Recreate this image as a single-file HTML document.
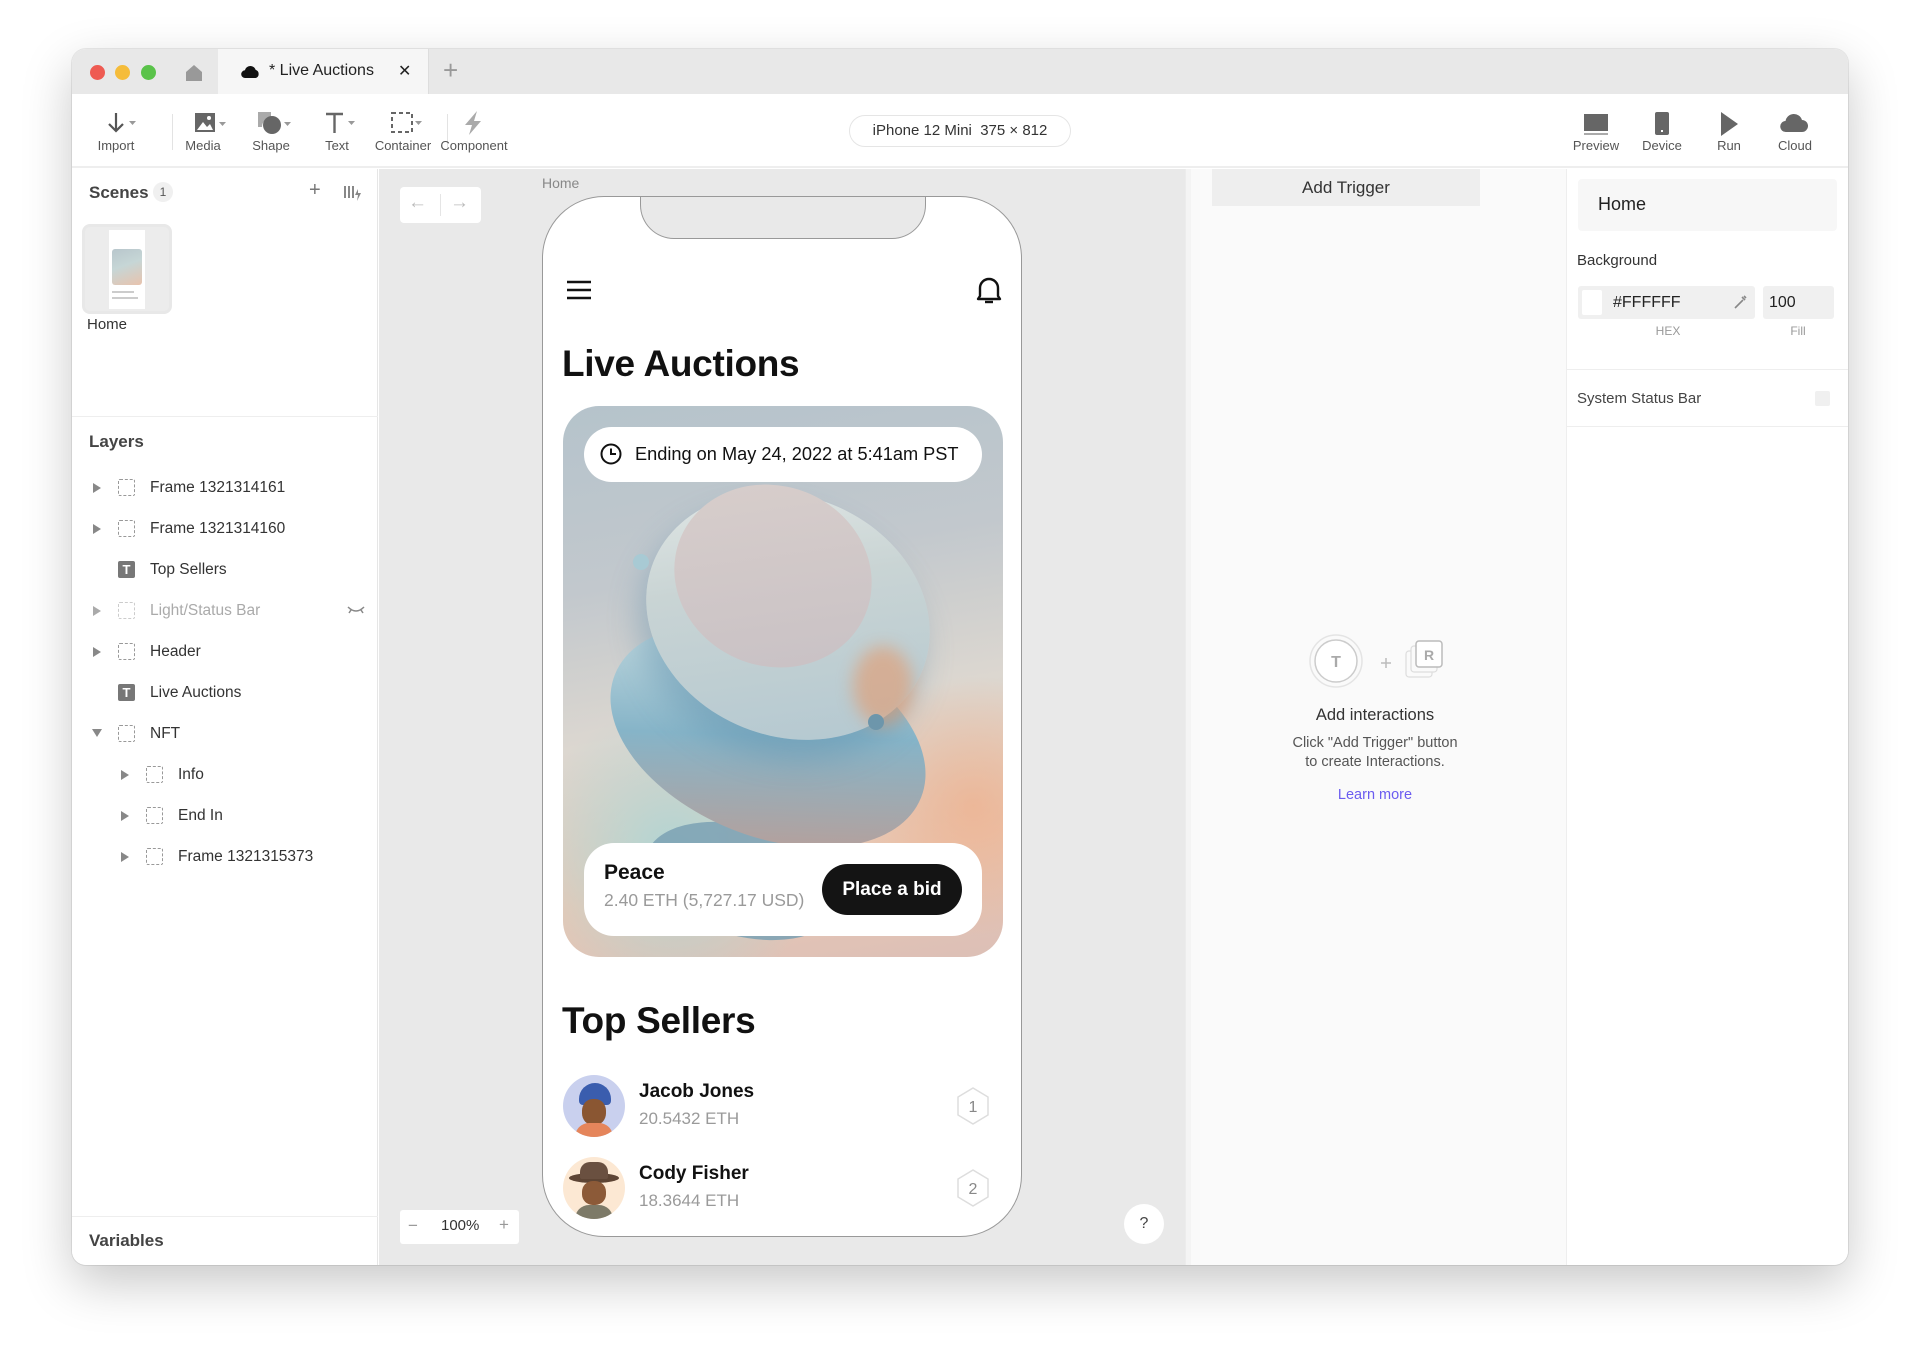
<!DOCTYPE html>
<html><head><meta charset="utf-8"><style>
*{box-sizing:border-box;margin:0;padding:0}
body{width:1920px;height:1361px;background:#fff;font-family:"Liberation Sans",sans-serif;position:relative;overflow:hidden;color:#333}
.abs{position:absolute}
.win{position:absolute;left:72px;top:49px;width:1776px;height:1216px;border-radius:14px;overflow:hidden;background:#fff;box-shadow:0 18px 50px rgba(0,0,0,.22),0 0 0 1px rgba(0,0,0,.08)}
.t{position:absolute;white-space:nowrap}
.lbl{font-size:13px;color:#555;text-align:center;width:90px}
.dash{position:absolute;width:17px;height:17px;border:1.5px dashed #999;border-radius:2px}
.tri{position:absolute;width:0;height:0;border-left:8px solid #888;border-top:5px solid transparent;border-bottom:5px solid transparent}
.ticon{position:absolute;width:17px;height:17px;background:#777;color:#fff;font-size:13px;font-weight:bold;text-align:center;line-height:17px;border-radius:2px}
</style></head><body>
<div class="win">
 <div class="abs" style="left:0;top:0;width:1776px;height:45px;background:#e8e8e8"></div>
 <div class="abs" style="left:18px;top:16px;width:15px;height:15px;border-radius:50%;background:#ee5b52"></div>
 <div class="abs" style="left:43px;top:16px;width:15px;height:15px;border-radius:50%;background:#f5bc3a"></div>
 <div class="abs" style="left:69px;top:16px;width:15px;height:15px;border-radius:50%;background:#5ac34a"></div>
 <svg class="abs" style="left:112px;top:14px" width="20" height="20" viewBox="0 0 20 20"><path d="M2 9 L10 2 L18 9 V18 H2Z" fill="#999"/></svg>
 <div class="abs" style="left:146px;top:0;width:210px;height:45px;background:#f6f6f6"></div>
 <svg class="abs" style="left:169px;top:16px" width="19" height="14" viewBox="0 0 22 16"><path d="M5 15 A4.5 4.5 0 0 1 4.5 6 A6.5 6.5 0 0 1 17 5.5 A5 5 0 0 1 17 15Z" fill="#111"/></svg>
 <div class="t" style="left:197px;top:13px;font-size:16px;color:#222">* Live Auctions</div>
 <div class="t" style="left:326px;top:12px;font-size:16px;color:#222">✕</div>
 <div class="abs" style="left:356px;top:0;width:1px;height:45px;background:#ddd"></div>
 <div class="t" style="left:371px;top:6px;font-size:26px;color:#999;font-weight:300">+</div>
 <div class="abs" style="left:0;top:45px;width:1776px;height:74px;background:#fff;border-bottom:2px solid #eee"></div>
 <svg class="abs" style="left:34px;top:62px" width="34" height="24" viewBox="0 0 34 24"><path d="M10 2V20M3 13L10 20L17 13" stroke="#555" stroke-width="2.2" fill="none"/><path d="M23 10h7l-3.5 4z" fill="#999"/></svg>
 <div class="t lbl" style="left:-1px;top:89px">Import</div>
 <div class="abs" style="left:100px;top:65px;width:1px;height:36px;background:#e3e3e3"></div>
 <svg class="abs" style="left:121px;top:63px" width="36" height="22" viewBox="0 0 36 22"><rect x="2" y="1" width="20" height="19" fill="#666"/><path d="M4 18L10 10L14 15L17 12L20 18Z" fill="#fff"/><circle cx="16" cy="6" r="2" fill="#fff"/><path d="M26 10h7l-3.5 4z" fill="#999"/></svg>
 <div class="t lbl" style="left:86px;top:89px">Media</div>
 <svg class="abs" style="left:184px;top:61px" width="38" height="26" viewBox="0 0 38 26"><path d="M2 2h13v6a9 9 0 0 0-9 9H2Z" fill="#aaa"/><circle cx="16" cy="15" r="9" fill="#666"/><path d="M28 12h7l-3.5 4z" fill="#999"/></svg>
 <div class="t lbl" style="left:154px;top:89px">Shape</div>
 <svg class="abs" style="left:252px;top:62px" width="34" height="24" viewBox="0 0 34 24"><path d="M2 3h17M10.5 3V22" stroke="#666" stroke-width="2.4"/><path d="M24 10h7l-3.5 4z" fill="#999"/></svg>
 <div class="t lbl" style="left:220px;top:89px">Text</div>
 <svg class="abs" style="left:318px;top:62px" width="36" height="24" viewBox="0 0 36 24"><rect x="2" y="2" width="20" height="19" fill="none" stroke="#666" stroke-width="2" stroke-dasharray="4 3"/><path d="M25 10h7l-3.5 4z" fill="#999"/></svg>
 <div class="t lbl" style="left:286px;top:89px">Container</div>
 <div class="abs" style="left:375px;top:65px;width:1px;height:36px;background:#e3e3e3"></div>
 <svg class="abs" style="left:389px;top:61px" width="24" height="26" viewBox="0 0 24 26"><path d="M16 1L4 15h7l-3 10L20 11h-7z" fill="#aaa"/></svg>
 <div class="t lbl" style="left:357px;top:89px">Component</div>
 <div class="abs" style="left:777px;top:66px;width:222px;height:32px;border:1.5px solid #e5e5e5;border-radius:16px;font-size:15px;color:#333;text-align:center;line-height:29px">iPhone 12 Mini&nbsp; 375 × 812</div>
 <svg class="abs" style="left:1509px;top:63px" width="30" height="26" viewBox="0 0 30 26"><rect x="3" y="2" width="24" height="17" fill="#666"/><rect x="3" y="21" width="24" height="2" fill="#aaa"/></svg>
 <div class="t lbl" style="left:1479px;top:89px">Preview</div>
 <svg class="abs" style="left:1580px;top:62px" width="20" height="26" viewBox="0 0 20 26"><rect x="3" y="1" width="14" height="23" rx="2" fill="#666"/><rect x="9" y="19" width="2" height="2" fill="#fff"/></svg>
 <div class="t lbl" style="left:1545px;top:89px">Device</div>
 <svg class="abs" style="left:1646px;top:62px" width="22" height="26" viewBox="0 0 22 26"><path d="M3 1L20 13L3 25Z" fill="#666"/></svg>
 <div class="t lbl" style="left:1612px;top:89px">Run</div>
 <svg class="abs" style="left:1707px;top:63px" width="30" height="22" viewBox="0 0 30 22"><path d="M7 20A5.5 5.5 0 0 1 6.5 9A8.5 8.5 0 0 1 23 8A6 6 0 0 1 23 20Z" fill="#666"/></svg>
 <div class="t lbl" style="left:1678px;top:89px">Cloud</div>
 <div class="abs" style="left:0;top:120px;width:306px;height:1096px;background:#fff;border-right:1px solid #e6e6e6"></div>
 <div class="t" style="left:17px;top:134px;font-size:17px;font-weight:bold;color:#444">Scenes</div>
 <div class="abs" style="left:81px;top:133px;width:20px;height:20px;border-radius:10px;background:#f0f0f0;font-size:12px;text-align:center;line-height:20px;color:#555">1</div>
 <div class="t" style="left:237px;top:130px;font-size:20px;color:#777">+</div>
 <svg class="abs" style="left:271px;top:135px" width="20" height="18" viewBox="0 0 20 18"><path d="M2 2v12M6 2v12M10 2v12" stroke="#888" stroke-width="2"/><path d="M15 5l-3 6h3l-1 6 4-8h-3z" fill="#888"/></svg>
 <div class="abs" style="left:10px;top:175px;width:90px;height:90px;border:3px solid #e8e8e8;border-radius:8px;background:#ececec"></div>
 <div class="abs" style="left:37px;top:181px;width:36px;height:79px;background:#fff"></div>
 <div class="abs" style="left:40px;top:200px;width:30px;height:36px;border-radius:3px;background:linear-gradient(160deg,#b8c6cc,#c6d6d6 45%,#e8c3ad)"></div>
 <div class="abs" style="left:40px;top:242px;width:22px;height:2px;background:#ccc"></div>
 <div class="abs" style="left:40px;top:248px;width:26px;height:2px;background:#ccc"></div>
 <div class="t" style="left:15px;top:267px;font-size:15px;color:#333">Home</div>
 <div class="abs" style="left:0;top:367px;width:306px;height:1px;background:#eee"></div>
 <div class="t" style="left:17px;top:383px;font-size:17px;font-weight:bold;color:#444">Layers</div>
 <div class="abs" style="left:0;top:0;width:306px">
  <div class="tri" style="left:21px;top:434px"></div><div class="dash" style="left:46px;top:430px"></div><div class="t" style="left:78px;top:430px;font-size:15.5px;color:#333">Frame 1321314161</div>
  <div class="tri" style="left:21px;top:475px"></div><div class="dash" style="left:46px;top:471px"></div><div class="t" style="left:78px;top:471px;font-size:15.5px;color:#333">Frame 1321314160</div>
  <div class="ticon" style="left:46px;top:512px">T</div><div class="t" style="left:78px;top:512px;font-size:15.5px;color:#333">Top Sellers</div>
  <div class="tri" style="left:21px;top:557px;border-left-color:#aaa"></div><div class="dash" style="left:46px;top:553px;border-color:#ccc"></div><div class="t" style="left:78px;top:553px;font-size:15.5px;color:#aaa">Light/Status Bar</div>
  <svg class="abs" style="left:275px;top:556px" width="18" height="10" viewBox="0 0 18 10"><path d="M1 2Q9 10 17 2M4 5l-2 3M14 5l2 3" stroke="#888" stroke-width="1.5" fill="none"/></svg>
  <div class="tri" style="left:21px;top:598px"></div><div class="dash" style="left:46px;top:594px"></div><div class="t" style="left:78px;top:594px;font-size:15.5px;color:#333">Header</div>
  <div class="ticon" style="left:46px;top:635px">T</div><div class="t" style="left:78px;top:635px;font-size:15.5px;color:#333">Live Auctions</div>
  <div class="abs" style="left:20px;top:680px;border-top:8px solid #888;border-left:5px solid transparent;border-right:5px solid transparent"></div><div class="dash" style="left:46px;top:676px"></div><div class="t" style="left:78px;top:676px;font-size:15.5px;color:#333">NFT</div>
  <div class="tri" style="left:49px;top:721px"></div><div class="dash" style="left:74px;top:717px"></div><div class="t" style="left:106px;top:717px;font-size:15.5px;color:#333">Info</div>
  <div class="tri" style="left:49px;top:762px"></div><div class="dash" style="left:74px;top:758px"></div><div class="t" style="left:106px;top:758px;font-size:15.5px;color:#333">End In</div>
  <div class="tri" style="left:49px;top:803px"></div><div class="dash" style="left:74px;top:799px"></div><div class="t" style="left:106px;top:799px;font-size:15.5px;color:#333">Frame 1321315373</div>
 </div>
 <div class="abs" style="left:0;top:1167px;width:306px;height:1px;background:#eee"></div>
 <div class="t" style="left:17px;top:1182px;font-size:17px;font-weight:bold;color:#444">Variables</div>
 <div class="abs" style="left:307px;top:120px;width:806px;height:1096px;background:#e9e9e9"></div>
 <div class="abs" style="left:328px;top:138px;width:81px;height:36px;background:#fff;border-radius:4px"></div>
 <div class="abs" style="left:368px;top:145px;width:1px;height:22px;background:#e5e5e5"></div>
 <div class="t" style="left:336px;top:143px;font-size:19px;color:#bbb">←</div>
 <div class="t" style="left:378px;top:143px;font-size:19px;color:#bbb">→</div>
 <div class="t" style="left:470px;top:126px;font-size:14px;color:#888">Home</div>
 <div class="abs" style="left:470px;top:147px;width:480px;height:1041px;background:#fff;border:1.5px solid #999;border-radius:62px;overflow:hidden">
  <div class="abs" style="left:97px;top:-4px;width:286px;height:46px;background:#e9e9e9;border:1.5px solid #999;border-top:none;border-radius:0 0 34px 34px"></div>
  <svg class="abs" style="left:22px;top:82px" width="28" height="22" viewBox="0 0 28 22"><path d="M2 3h24M2 11h24M2 19h24" stroke="#111" stroke-width="2.5"/></svg>
  <svg class="abs" style="left:432px;top:78px" width="28" height="30" viewBox="0 0 28 30"><path d="M5 21V13a9 9 0 0 1 18 0v8l2 3H3Z" stroke="#111" stroke-width="2.4" fill="none" stroke-linejoin="round"/><path d="M10 27h8" stroke="#111" stroke-width="2.4"/></svg>
  <div class="t" style="left:19px;top:146px;font-size:37px;font-weight:bold;color:#111;letter-spacing:-.3px">Live Auctions</div>
  <div class="abs" style="left:20px;top:209px;width:440px;height:551px;border-radius:36px;overflow:hidden;background:linear-gradient(170deg,#b5c3cb 0%,#c2c8cd 30%,#dcd7d0 55%,#e8c8b5 80%,#dcbfb6 100%)">
   <div class="abs" style="left:-40px;top:300px;width:300px;height:300px;border-radius:50%;background:radial-gradient(circle,rgba(170,215,215,.9),rgba(170,215,215,0) 70%)"></div>
   <div class="abs" style="left:300px;top:250px;width:220px;height:300px;border-radius:50%;background:radial-gradient(circle,rgba(240,170,130,.6),rgba(240,170,130,0) 70%)"></div>
   <div class="abs" style="left:80px;top:420px;width:200px;height:110px;border-radius:50%;background:#7ba1b4;transform:rotate(15deg);opacity:.85"></div>
   <div class="abs" style="left:40px;top:230px;width:330px;height:200px;border-radius:50%;background:linear-gradient(160deg,#d8e6e6,#86b4c8 50%,#c49a8e);transform:rotate(22deg)"></div>
   <div class="abs" style="left:80px;top:90px;width:290px;height:240px;border-radius:50%;background:linear-gradient(150deg,#e7ecea,#c9d4d4 40%,#b0c6d0);transform:rotate(22deg);box-shadow:0 20px 30px rgba(90,140,170,.4)"></div>
   <div class="abs" style="left:110px;top:80px;width:200px;height:180px;border-radius:50%;background:linear-gradient(150deg,#d9cfcc,#c7c0c4);transform:rotate(22deg)"></div>
   <div class="abs" style="left:290px;top:240px;width:60px;height:80px;border-radius:50%;background:rgba(232,150,100,.55);filter:blur(8px)"></div>
   <div class="abs" style="left:70px;top:148px;width:16px;height:16px;border-radius:50%;background:#a8cad4"></div>
   <div class="abs" style="left:305px;top:308px;width:16px;height:16px;border-radius:50%;background:#6d96ab"></div>
   <div class="abs" style="left:21px;top:21px;width:398px;height:55px;border-radius:28px;background:#fff"></div>
   <svg class="abs" style="left:36px;top:36px" width="24" height="24" viewBox="0 0 24 24"><circle cx="12" cy="12" r="9.5" stroke="#111" stroke-width="2" fill="none"/><path d="M12 6.5V12h5" stroke="#111" stroke-width="2" fill="none"/></svg>
   <div class="t" style="left:72px;top:38px;font-size:18.2px;color:#111">Ending on May 24, 2022 at 5:41am PST</div>
   <div class="abs" style="left:21px;top:437px;width:398px;height:93px;border-radius:30px;background:#fff"></div>
   <div class="t" style="left:41px;top:455px;font-size:21px;font-weight:bold;color:#111">Peace</div>
   <div class="t" style="left:41px;top:484px;font-size:17.5px;color:#9a9a9a">2.40 ETH (5,727.17 USD)</div>
   <div class="abs" style="left:259px;top:458px;width:140px;height:51px;border-radius:26px;background:#141414;color:#fff;font-size:19px;font-weight:bold;text-align:center;line-height:51px">Place a bid</div>
  </div>
  <div class="t" style="left:19px;top:803px;font-size:37px;font-weight:bold;color:#111;letter-spacing:-.3px">Top Sellers</div>
  <div class="abs" style="left:20px;top:878px;width:62px;height:62px;border-radius:50%;background:#c9d0ee;overflow:hidden">
   <div class="abs" style="left:16px;top:8px;width:32px;height:22px;border-radius:16px 16px 4px 4px;background:#3a5dae"></div>
   <div class="abs" style="left:19px;top:24px;width:24px;height:26px;border-radius:45%;background:#8a5632"></div>
   <div class="abs" style="left:12px;top:48px;width:38px;height:20px;border-radius:14px 14px 0 0;background:#e5855b"></div>
  </div>
  <div class="t" style="left:96px;top:884px;font-size:19px;font-weight:bold;color:#111">Jacob Jones</div>
  <div class="t" style="left:96px;top:912px;font-size:17px;color:#9a9a9a">20.5432 ETH</div>
  <svg class="abs" style="left:412px;top:889px" width="36" height="40" viewBox="0 0 36 40"><path d="M18 2L33 11V29L18 38L3 29V11Z" fill="none" stroke="#ddd" stroke-width="1.5"/><text x="18" y="26" font-size="16" text-anchor="middle" fill="#888" font-family="Liberation Sans">1</text></svg>
  <div class="abs" style="left:20px;top:960px;width:62px;height:62px;border-radius:50%;background:#fce8d3;overflow:hidden">
   <div class="abs" style="left:6px;top:16px;width:50px;height:10px;border-radius:50%;background:#5d4434"></div>
   <div class="abs" style="left:17px;top:5px;width:28px;height:17px;border-radius:10px 10px 2px 2px;background:#6a5040"></div>
   <div class="abs" style="left:19px;top:24px;width:24px;height:24px;border-radius:45%;background:#8c5a38"></div>
   <div class="abs" style="left:12px;top:48px;width:38px;height:20px;border-radius:14px 14px 0 0;background:#7d7a68"></div>
  </div>
  <div class="t" style="left:96px;top:966px;font-size:19px;font-weight:bold;color:#111">Cody Fisher</div>
  <div class="t" style="left:96px;top:994px;font-size:17px;color:#9a9a9a">18.3644 ETH</div>
  <svg class="abs" style="left:412px;top:971px" width="36" height="40" viewBox="0 0 36 40"><path d="M18 2L33 11V29L18 38L3 29V11Z" fill="none" stroke="#ddd" stroke-width="1.5"/><text x="18" y="26" font-size="16" text-anchor="middle" fill="#888" font-family="Liberation Sans">2</text></svg>
 </div>
 <div class="abs" style="left:328px;top:1161px;width:119px;height:34px;background:#fff;border-radius:3px"></div>
 <div class="t" style="left:336px;top:1167px;font-size:17px;color:#999">−</div>
 <div class="t" style="left:369px;top:1168px;font-size:15px;color:#333">100%</div>
 <div class="t" style="left:427px;top:1166px;font-size:17px;color:#999">+</div>
 <div class="abs" style="left:1052px;top:1155px;width:40px;height:40px;border-radius:50%;background:#fff;font-size:16px;text-align:center;line-height:40px;color:#444">?</div>
 <div class="abs" style="left:1113px;top:120px;width:6px;height:1096px;background:#f4f4f4;border-left:1px solid #ececec"></div>
 <div class="abs" style="left:1119px;top:120px;width:376px;height:1096px;background:#fafafa;border-right:1px solid #eee"></div>
 <div class="abs" style="left:1140px;top:120px;width:268px;height:37px;background:#eeeeee;font-size:17px;color:#333;text-align:center;line-height:37px">Add Trigger</div>
 <svg class="abs" style="left:1236px;top:582px" width="170" height="60" viewBox="0 0 170 60"><circle cx="28" cy="30" r="26" fill="none" stroke="#e4e4e4" stroke-width="1.5"/><circle cx="28" cy="30" r="21" fill="#fff" stroke="#ccc" stroke-width="1.5"/><text x="28" y="36" font-size="16" text-anchor="middle" fill="#aaa" font-family="Liberation Sans" font-weight="bold">T</text><path d="M73 32h10M78 27v10" stroke="#bbb" stroke-width="1.5"/><rect x="98" y="20" width="26" height="26" rx="3" fill="#fafafa" stroke="#ddd" stroke-width="1.2"/><rect x="103" y="15" width="26" height="26" rx="3" fill="#fafafa" stroke="#ddd" stroke-width="1.2"/><rect x="108" y="10" width="26" height="26" rx="3" fill="#fff" stroke="#bbb" stroke-width="1.5"/><text x="121" y="29" font-size="14" text-anchor="middle" fill="#aaa" font-family="Liberation Sans" font-weight="bold">R</text></svg>
 <div class="t" style="left:1203px;top:657px;width:200px;text-align:center;font-size:16.5px;color:#333">Add interactions</div>
 <div class="t" style="left:1183px;top:685px;width:240px;text-align:center;font-size:14.5px;color:#555;line-height:19px;white-space:normal">Click "Add Trigger" button<br>to create Interactions.</div>
 <div class="t" style="left:1203px;top:738px;width:200px;text-align:center;font-size:14.5px;color:#6b5cf0">Learn more</div>
 <div class="abs" style="left:1495px;top:120px;width:281px;height:1096px;background:#fff"></div>
 <div class="abs" style="left:1506px;top:130px;width:259px;height:52px;background:#f7f7f7;border-radius:4px"></div>
 <div class="t" style="left:1526px;top:145px;font-size:18px;color:#222">Home</div>
 <div class="t" style="left:1505px;top:203px;font-size:15px;color:#333">Background</div>
 <div class="abs" style="left:1506px;top:237px;width:177px;height:33px;background:#f0f0f0;border-radius:3px"></div>
 <div class="abs" style="left:1510px;top:241px;width:20px;height:25px;background:#fff;border-radius:2px"></div>
 <div class="t" style="left:1541px;top:245px;font-size:16px;color:#222">#FFFFFF</div>
 <svg class="abs" style="left:1660px;top:245px" width="16" height="16" viewBox="0 0 16 16"><path d="M3 14l8-8M10 3l3 3M12 2l2 2" stroke="#888" stroke-width="1.6"/></svg>
 <div class="abs" style="left:1691px;top:237px;width:71px;height:33px;background:#f0f0f0;border-radius:3px"></div>
 <div class="t" style="left:1697px;top:245px;font-size:16px;color:#222">100</div>
 <div class="t" style="left:1576px;top:275px;width:40px;text-align:center;font-size:12px;color:#999">HEX</div>
 <div class="t" style="left:1706px;top:275px;width:40px;text-align:center;font-size:12px;color:#999">Fill</div>
 <div class="abs" style="left:1495px;top:320px;width:281px;height:1px;background:#eee"></div>
 <div class="t" style="left:1505px;top:341px;font-size:15px;color:#444">System Status Bar</div>
 <div class="abs" style="left:1743px;top:342px;width:15px;height:15px;background:#f0f0f0;border-radius:2px"></div>
 <div class="abs" style="left:1495px;top:377px;width:281px;height:1px;background:#eee"></div>
</div>
</body></html>
